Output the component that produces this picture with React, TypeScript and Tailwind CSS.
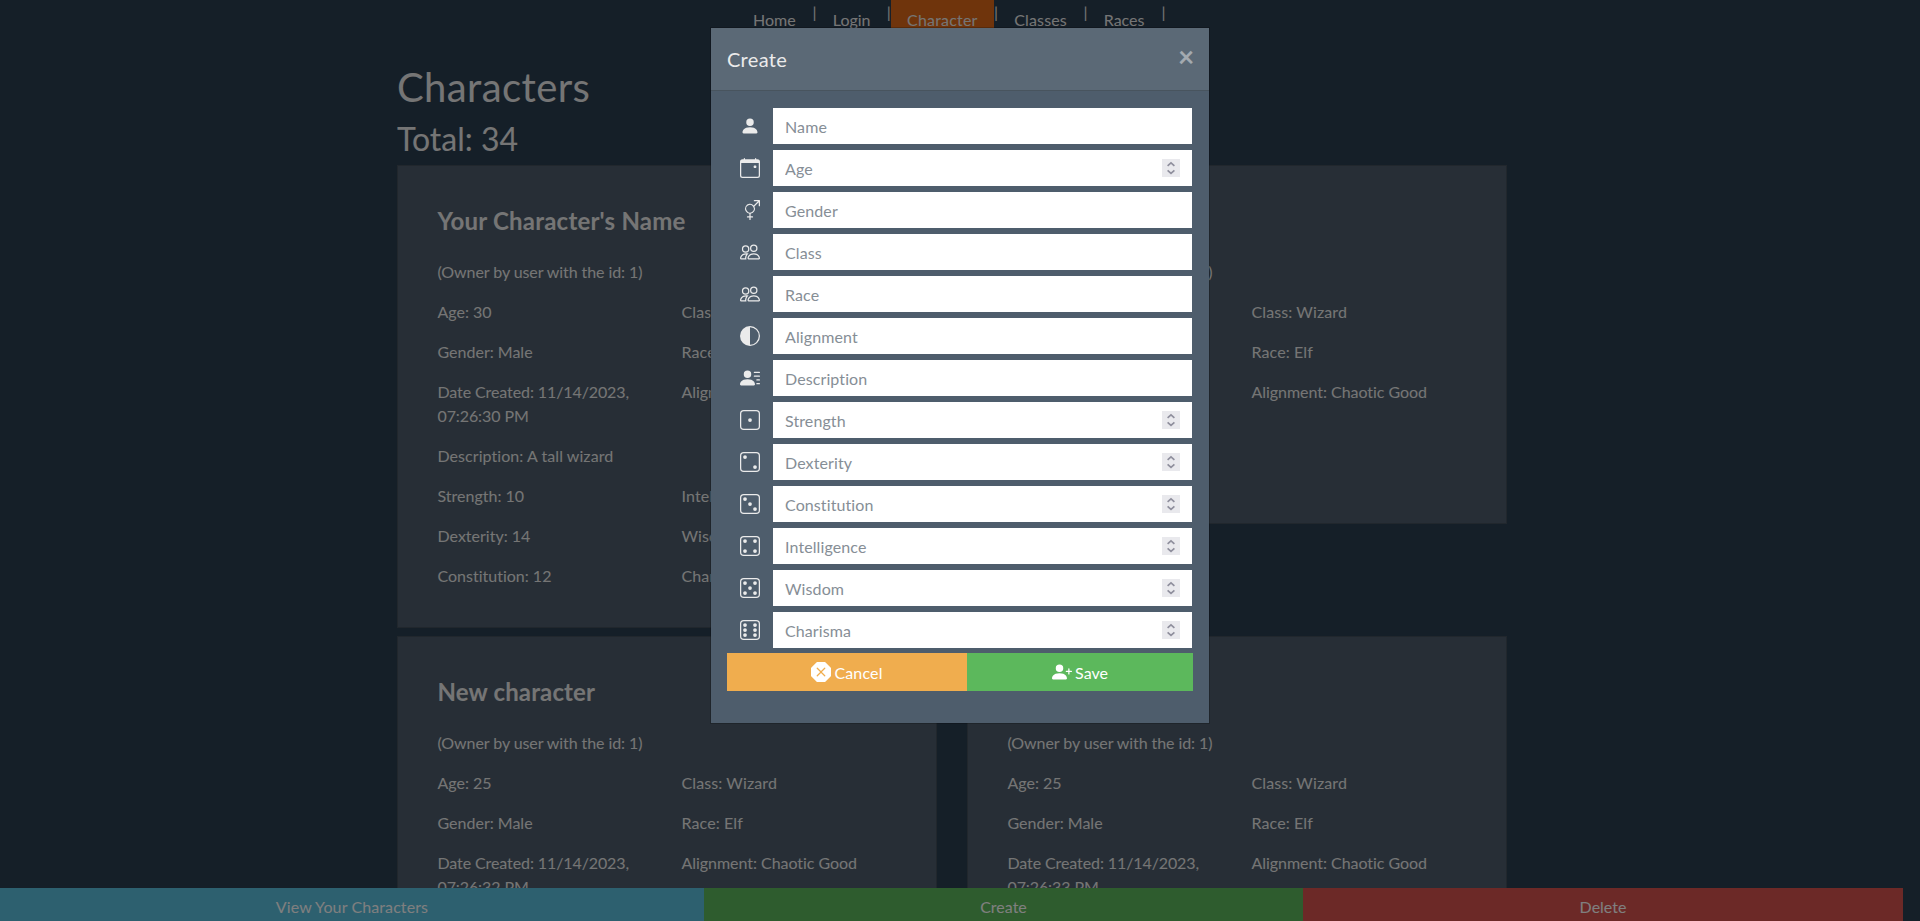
import type { IconType } from "react-icons";
import {
  BsCalendarEvent,
  BsCircleHalf,
  BsDice1,
  BsDice2,
  BsDice3,
  BsDice4,
  BsDice5,
  BsDice6,
  BsGenderAmbiguous,
  BsPeople,
  BsPersonFill,
  BsPersonLinesFill,
  BsPersonPlusFill,
  BsXOctagonFill,
} from "react-icons/bs";

const navItems = [
  { label: "Home", style: "w-[75.5px]" },
  { label: "Login", style: "w-[70px]" },
  { label: "Character", style: "w-[103px] bg-[#df6919] tracking-[0.2px]" },
  { label: "Classes", style: "w-[85.25px] tracking-[0.15px]" },
  { label: "Races", style: "w-[73.75px]" },
];

type Character = {
  name: string;
  age: number;
  created: string;
  description?: string;
  stats?: [string, string][];
};

const leftCharacters: Character[] = [
  {
    name: "Your Character's Name",
    age: 30,
    created: "11/14/2023, 07:26:30 PM",
    description: "A tall wizard",
    stats: [
      ["Strength: 10", "Intelligence: 18"],
      ["Dexterity: 14", "Wisdom: 16"],
      ["Constitution: 12", "Charisma: 8"],
    ],
  },
  { name: "New character", age: 25, created: "11/14/2023, 07:26:32 PM" },
];

const rightCharacters: Character[] = [
  { name: "New character", age: 25, created: "11/14/2023, 07:26:31 PM" },
  { name: "New character", age: 25, created: "11/14/2023, 07:26:33 PM" },
];

const fields: { label: string; icon: IconType; numeric?: boolean }[] = [
  { label: "Name", icon: BsPersonFill },
  { label: "Age", icon: BsCalendarEvent, numeric: true },
  { label: "Gender", icon: BsGenderAmbiguous },
  { label: "Class", icon: BsPeople },
  { label: "Race", icon: BsPeople },
  { label: "Alignment", icon: BsCircleHalf },
  { label: "Description", icon: BsPersonLinesFill },
  { label: "Strength", icon: BsDice1, numeric: true },
  { label: "Dexterity", icon: BsDice2, numeric: true },
  { label: "Constitution", icon: BsDice3, numeric: true },
  { label: "Intelligence", icon: BsDice4, numeric: true },
  { label: "Wisdom", icon: BsDice5, numeric: true },
  { label: "Charisma", icon: BsDice6, numeric: true },
];

function Navbar() {
  return (
    <nav className="flex h-10 pl-[737px]">
      {navItems.map(({ label, style }) => (
        <div key={label} className="flex">
          <a className={`py-2 pl-4 ${style}`}>{label}</a>
          <span className="flex w-[4.25px] justify-center">|</span>
        </div>
      ))}
    </nav>
  );
}

function Row({ left, right, tight }: { left: string; right?: string; tight?: boolean }) {
  return (
    <div className="grid grid-cols-[244px_1fr]">
      <p className={tight ? "pr-10 tracking-[-0.1px]" : "pr-10"}>{left}</p>
      {right && <p className={tight ? "tracking-[-0.04px]" : "tracking-[0.1px]"}>{right}</p>}
    </div>
  );
}

function CharacterCard({ character, className }: { character: Character; className: string }) {
  const titleTracking = character.name.startsWith("New") ? "tracking-[0.14px]" : "tracking-[0.21px]";
  return (
    <article className={`w-[540px] border border-black/15 bg-[#4e5d6c] pr-[39px] pl-[39.5px] pt-10 ${className}`}>
      <h4 className={`mb-[25px] text-2xl leading-[29px] font-bold ${titleTracking}`}>{character.name}</h4>
      <div className="flex flex-col gap-4">
        <p className="tracking-[-0.08px]">(Owner by user with the id: 1)</p>
        <Row left={`Age: ${character.age}`} right="Class: Wizard" />
        <Row left="Gender: Male" right="Race: Elf" />
        <Row left={`Date Created: ${character.created}`} right="Alignment: Chaotic Good" tight />
        {character.description && <p className="tracking-[0.06px]">Description: {character.description}</p>}
        {character.stats?.map(([left, right]) => (
          <Row key={left} left={left} right={right} />
        ))}
      </div>
    </article>
  );
}

function Stepper() {
  return (
    <span className="absolute top-[9px] right-3 flex size-[18px] items-center justify-center bg-[#e9e9ed]">
      <svg viewBox="0 0 18 18" className="size-[18px]" fill="none" stroke="#8f8f9d" strokeWidth="1.7">
        <path d="M5.6 6.8 9 3.8l3.4 3M5.6 11.4 9 14.4l3.4-3" />
      </svg>
    </span>
  );
}

function CreateModal() {
  return (
    <section className="fixed top-[27px] left-[710px] w-[500px] border border-black/20 bg-[#4e5d6c] bg-clip-padding">
      <header className="flex h-[63px] items-start justify-between border-b border-black/20 bg-white/[0.075] p-4">
        <h5 className="text-xl leading-[30px] tracking-[0.3px]">Create</h5>
        <button className="flex h-6 w-[14px] justify-center text-[28px] leading-[24px] font-bold opacity-50">×</button>
      </header>
      <div className="px-4 pt-[17px] pb-8">
        <div className="flex flex-col gap-1.5">
          {fields.map(({ label, icon: Icon, numeric }) => (
            <label key={label} className="flex h-9">
              <span className="flex w-[46px] items-center justify-end pr-[13px]">
                <Icon className="size-5" />
              </span>
              <span className="relative block w-[419px]">
                <input
                  placeholder={label}
                  className="block h-9 w-full bg-white px-3 py-1.5 leading-6 tracking-[0.1px] text-[#2b3e50] outline-none placeholder:text-[#868e96]"
                />
                {numeric && <Stepper />}
              </span>
            </label>
          ))}
        </div>
        <div className="mt-[5px] flex h-[38px] text-white">
          <button className="flex w-60 items-center justify-center gap-[3px] bg-[#f0ad4e]">
            <BsXOctagonFill className="size-5" />
            <span className="pt-px tracking-[0.15px]">Cancel</span>
          </button>
          <button className="flex w-[226px] items-center justify-center gap-[3px] bg-[#5cb85c]">
            <BsPersonPlusFill className="size-5" />
            <span className="pt-px">Save</span>
          </button>
        </div>
      </div>
    </section>
  );
}

export default function App() {
  return (
    <div className="relative h-[921px] w-[1920px] overflow-hidden bg-[#2b3e50] font-[Lato,sans-serif] text-base leading-6 text-[#ebebeb] [font-variant-ligatures:none]">
      <Navbar />
      <main className="ml-[397px] w-[1110px] pt-[23px]">
        <h1 className="mb-2 text-[40px] leading-[48px] tracking-[0.4px]">Characters</h1>
        <h2 className="mb-[7px] text-[32px] leading-[39px]">Total: 34</h2>
        <div className="flex justify-between">
          <div className="flex flex-col gap-2">
            <CharacterCard character={leftCharacters[0]} className="h-[463px]" />
            <CharacterCard character={leftCharacters[1]} className="h-[359px]" />
          </div>
          <div className="flex flex-col gap-28">
            <CharacterCard character={rightCharacters[0]} className="h-[359px]" />
            <CharacterCard character={rightCharacters[1]} className="h-[359px]" />
          </div>
        </div>
      </main>
      <footer className="fixed bottom-0 left-0 flex h-[33px] w-[1903px] text-center text-white">
        <button className="flex w-[704px] justify-center bg-[#5bc0de] pt-[7px] tracking-[0.1px]">View Your Characters</button>
        <button className="flex w-[599px] justify-center bg-[#5cb85c] pt-[7px]">Create</button>
        <button className="flex w-[600px] justify-center bg-[#d9534f] pt-[7px]">Delete</button>
      </footer>
      <div className="fixed inset-0 bg-black/50" />
      <CreateModal />
    </div>
  );
}
